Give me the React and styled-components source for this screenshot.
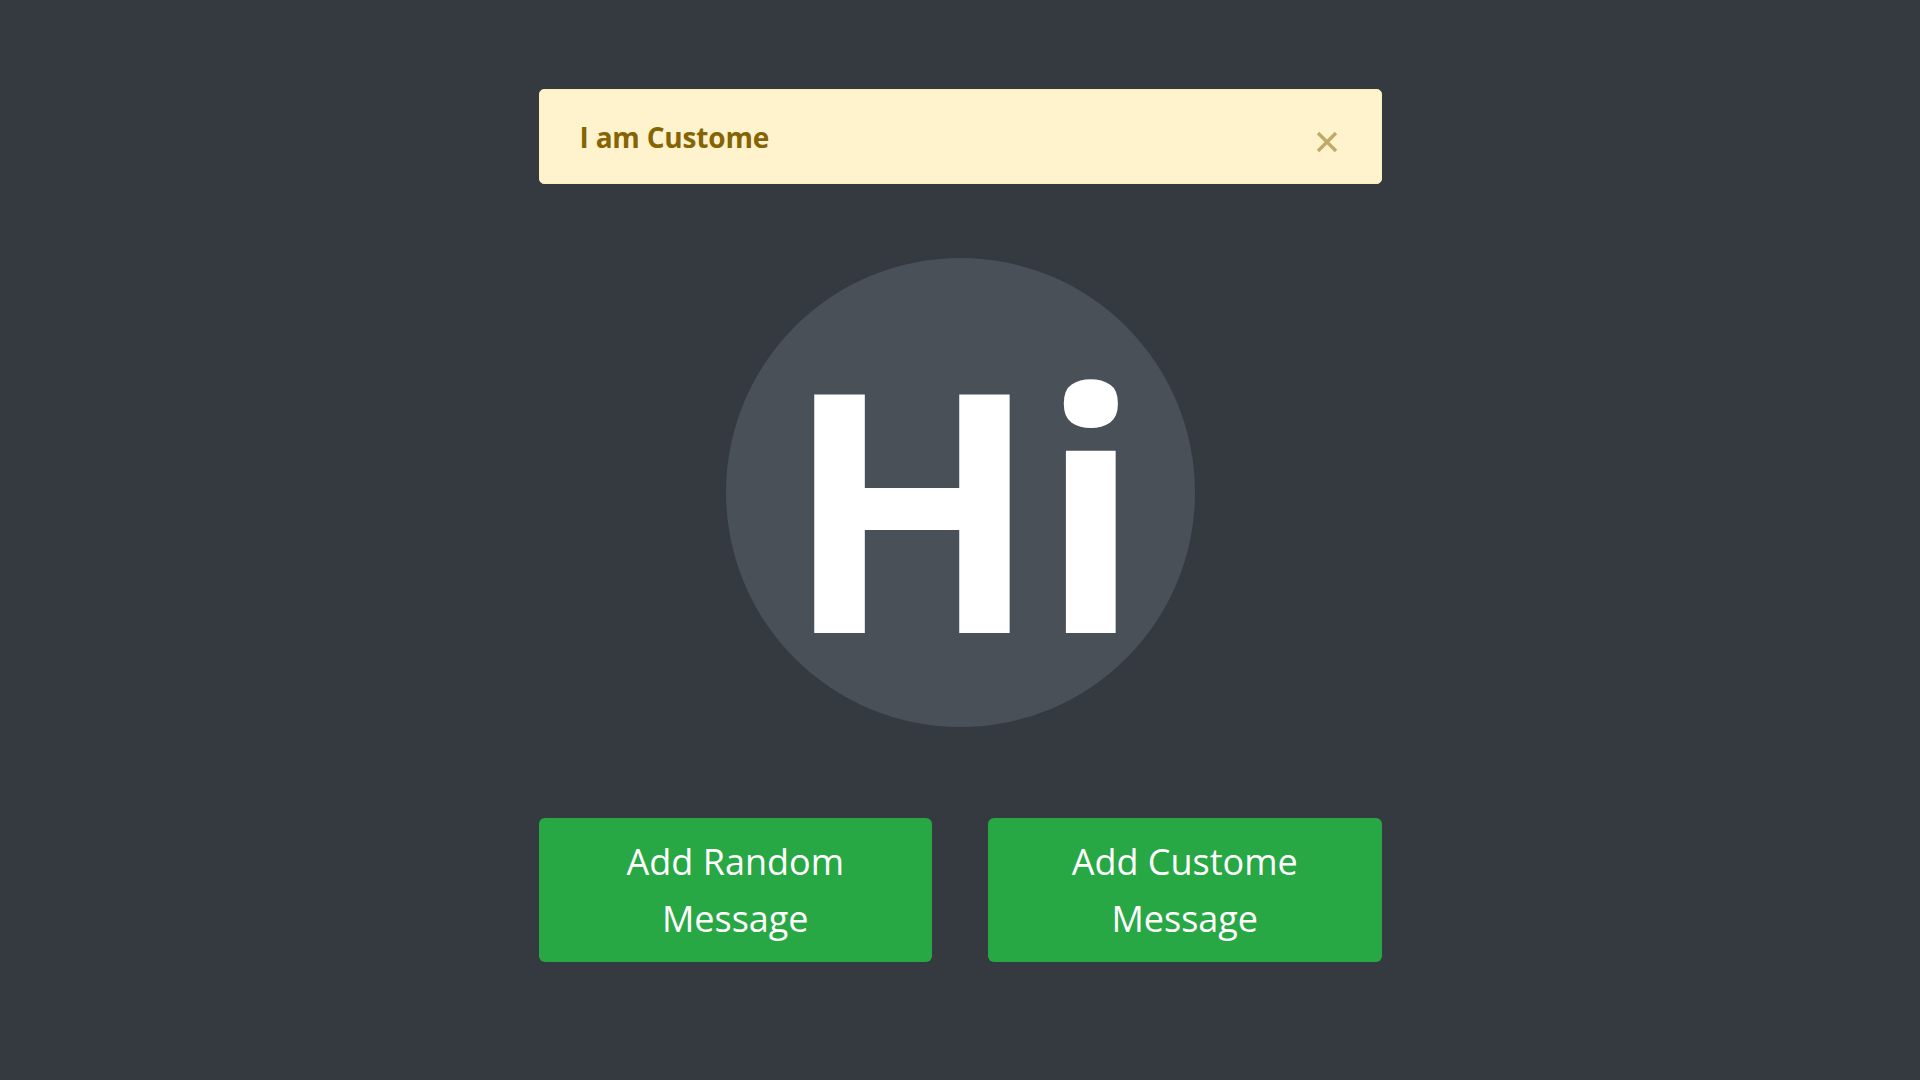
import styled, { createGlobalStyle } from "styled-components";

const GlobalStyle = createGlobalStyle`
  html, body {
    margin: 0;
    padding: 0;
    background: #343a40;
    font-family: "Open Sans", "Noto Sans", sans-serif;
  }
`;

const Page = styled.div`
  min-height: 100vh;
  display: flex;
  justify-content: center;
`;

const Container = styled.div`
  width: 843px;
  padding-top: 89px;
  display: flex;
  flex-direction: column;
  align-items: center;
`;

const Alert = styled.div`
  box-sizing: border-box;
  width: 100%;
  height: 95px;
  padding: 0 43px 0 40px;
  display: flex;
  align-items: center;
  justify-content: space-between;
  background: #fff3cd;
  border: 1px solid #ffeeba;
  border-radius: 5px;
`;

const AlertText = styled.span`
  font-family: "Open Sans", Lato, sans-serif;
  font-weight: 700;
  font-size: 28px;
  letter-spacing: -0.2px;
  color: #856404;
`;

const CloseButton = styled.button`
  border: none;
  background: none;
  padding: 0;
  margin-top: 10px;
  cursor: pointer;
  color: #856404;
  opacity: 0.5;
  display: flex;
`;

const Avatar = styled.div`
  margin-top: 74px;
  width: 469px;
  height: 469px;
  border-radius: 50%;
  background: #495057;
  display: flex;
  align-items: center;
  justify-content: center;
`;

const AvatarText = styled.span`
  font-family: "Open Sans", "Noto Sans", sans-serif;
  font-weight: 700;
  font-size: 334px;
  line-height: 1;
  color: #ffffff;
  margin-top: 22px;
  margin-left: 6px;
`;

const ButtonRow = styled.div`
  margin-top: 91px;
  width: 100%;
  display: grid;
  grid-template-columns: 1fr 1fr;
  gap: 56px;
`;

const ActionButton = styled.button`
  height: 144px;
  padding: 15px 60px;
  border: none;
  border-radius: 6px;
  background: #28a745;
  color: #ffffff;
  font-family: "Open Sans", "Noto Sans", sans-serif;
  font-size: 36px;
  line-height: 57px;
  text-align: center;
  cursor: pointer;
`;

function App() {
  return (
    <>
      <GlobalStyle />
      <Page>
        <Container>
          <Alert>
            <AlertText>I am Custome</AlertText>
            <CloseButton aria-label="Close">
              <svg width="22" height="22" viewBox="0 0 22 22">
                <path
                  d="M2 2 L20 20 M20 2 L2 20"
                  stroke="currentColor"
                  strokeWidth="3.4"
                />
              </svg>
            </CloseButton>
          </Alert>
          <Avatar>
            <AvatarText>Hi</AvatarText>
          </Avatar>
          <ButtonRow>
            <ActionButton>Add Random Message</ActionButton>
            <ActionButton>Add Custome Message</ActionButton>
          </ButtonRow>
        </Container>
      </Page>
    </>
  );
}

export default App;
